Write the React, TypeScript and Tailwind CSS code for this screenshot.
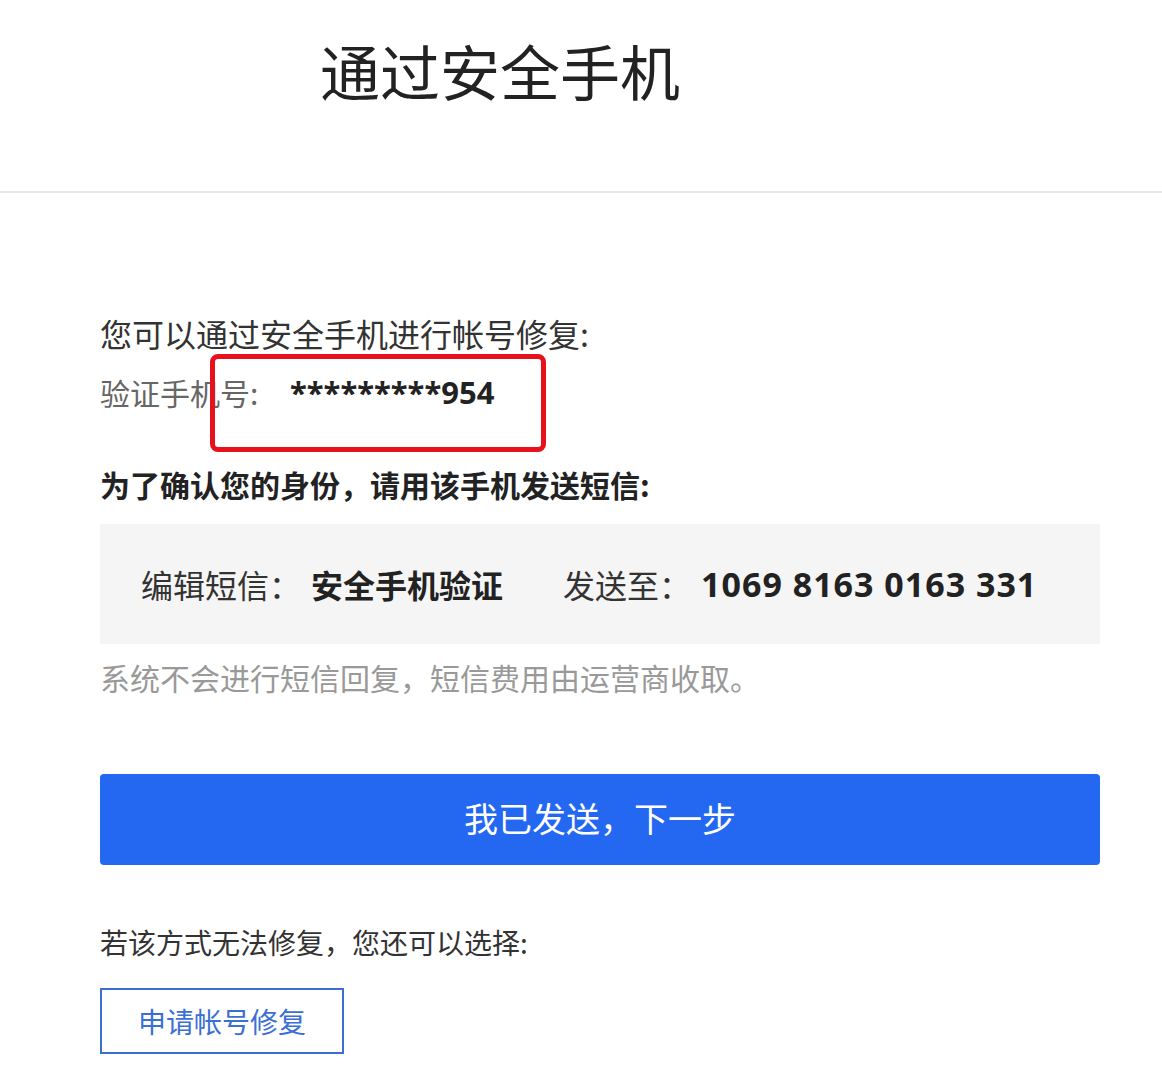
import React from "react";

const cjk = { fontFamily: '"Noto Sans CJK SC", "Noto Sans", sans-serif' };
const num = { fontFamily: '"Noto Sans", "Noto Sans CJK SC", sans-serif' };

export default function App() {
  return (
    <div className="w-[1162px] min-h-[1090px] bg-white text-[#333]" style={cjk}>
      <div className="h-[193px] border-b-2 border-[#e8e8e8] pl-[320px] pt-[38px]">
        <h1 className="text-[60px] leading-[64px] text-[#222] font-normal">通过安全手机</h1>
      </div>

      <div className="relative pl-[100px] pr-[62px] pt-[120px]">
        <div className="text-[32px] leading-[40px] text-[#333]">您可以通过安全手机进行帐号修复:</div>
        <div className="mt-[19px] flex items-center h-[40px]">
          <span className="text-[30px] leading-[40px] text-[#666] w-[190px]">验证手机号:</span>
          <span className="text-[31px] leading-[40px] font-bold text-[#222]" style={num}>*********954</span>
        </div>

        <div className="absolute left-[210px] top-[161px] w-[336px] h-[98px] border-[5px] border-[#e8101a] rounded-[8px]"></div>

        <div className="mt-[52px] text-[30px] leading-[40px] font-bold text-[#222]">为了确认您的身份，请用该手机发送短信:</div>

        <div className="mt-[20px] h-[120px] bg-[#f5f5f5] flex items-center pl-[41px] text-[32px] text-[#333]">
          <span>编辑短信：</span>
          <span className="font-bold text-[#222] ml-[10px]">安全手机验证</span>
          <span className="ml-[60px]">发送至：</span>
          <span className="font-bold text-[#222] ml-[10px] text-[34px] tracking-[1px]" style={num}>1069 8163 0163 331</span>
        </div>

        <div className="mt-[13px] text-[30px] leading-[40px] text-[#999]">系统不会进行短信回复，短信费用由运营商收取。</div>

        <button className="mt-[77px] w-full h-[91px] bg-[#2468f2] rounded-[4px] text-white text-[34px] leading-[40px] pb-[4px] flex items-center justify-center" style={cjk}>
          我已发送，下一步
        </button>

        <div className="mt-[58px] text-[28px] leading-[38px] text-[#333]">若该方式无法修复，您还可以选择:</div>

        <button className="mt-[27px] w-[244px] h-[66px] border-2 border-[#3a6fd3] text-[#3a6fd3] text-[28px] flex items-center justify-center" style={cjk}>
          申请帐号修复
        </button>
      </div>
    </div>
  );
}
